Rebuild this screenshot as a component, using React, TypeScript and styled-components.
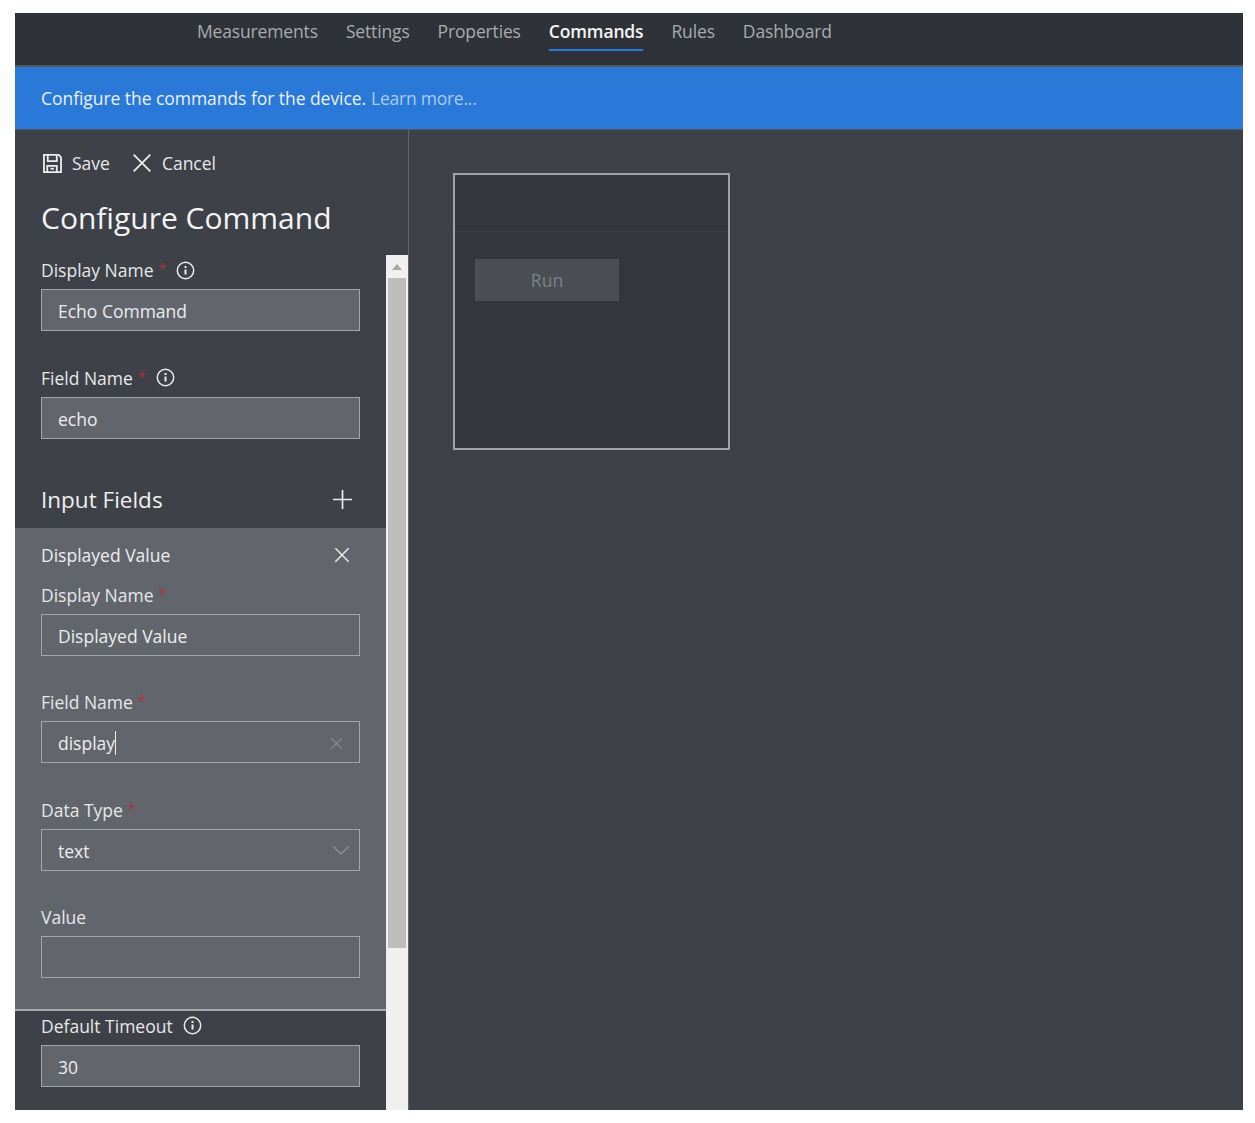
import React from 'react';
import styled, { createGlobalStyle } from 'styled-components';

const GlobalStyle = createGlobalStyle`
  html, body {
    margin: 0;
    padding: 0;
    background: #ffffff;
  }
  * {
    box-sizing: border-box;
  }
`;

const Frame = styled.div`
  width: 1228px;
  height: 1097px;
  margin: 13px 0 0 15px;
  display: flex;
  flex-direction: column;
  overflow: hidden;
  background: #3e4148;
  color: #e6e7e8;
  font-family: 'Open Sans', 'Noto Sans', 'Liberation Sans', sans-serif;
  font-size: 17.5px;
`;

const TopNav = styled.nav`
  height: 52px;
  flex-shrink: 0;
  display: flex;
  gap: 28px;
  padding-left: 182px;
  background: #2f3239;
`;

const Tab = styled.div<{ active?: boolean }>`
  height: 38px;
  line-height: 37px;
  color: ${props => (props.active ? '#f4f4f5' : '#a9abaf')};
  font-weight: ${props => (props.active ? 600 : 500)};
  border-bottom: 2px solid ${props => (props.active ? '#2a78d8' : 'transparent')};
  letter-spacing: -0.15px;
`;

const Banner = styled.div`
  height: 65px;
  flex-shrink: 0;
  display: flex;
  align-items: center;
  gap: 5px;
  padding-left: 26px;
  background: #2a78d8;
  border-top: 2px solid #55585e;
  border-bottom: 1px solid #55585e;
  color: #e8f1fb;
  letter-spacing: -0.05px;
`;

const LearnMore = styled.span`
  color: #a9cbf1;
  letter-spacing: -0.25px;
`;

const Body = styled.div`
  flex: 1;
  min-height: 0;
  display: flex;
`;

const Panel = styled.aside`
  width: 394px;
  flex-shrink: 0;
  display: flex;
  flex-direction: column;
  border-right: 1px solid #65676c;
`;

const Toolbar = styled.div`
  height: 36px;
  margin-top: 15px;
  display: flex;
  align-items: center;
  padding-left: 28px;
`;

const ToolButton = styled.div`
  display: flex;
  align-items: center;
  gap: 10px;
  margin-right: 22px;
  color: #e6e7e8;
`;

const Title = styled.h1`
  height: 54px;
  margin: 0;
  padding-left: 26px;
  font-size: 30px;
  font-weight: 400;
  line-height: 74px;
  color: #f4f4f5;
`;

const ScrollArea = styled.div`
  flex: 1;
  min-height: 0;
  margin-top: 20px;
  display: flex;
  overflow: hidden;
`;

const ScrollContent = styled.div`
  width: 371px;
  flex-shrink: 0;
`;

const ScrollBar = styled.div`
  width: 22px;
  flex-shrink: 0;
  display: flex;
  flex-direction: column;
  align-items: center;
  background: #f0f0f0;
`;

const ScrollArrow = styled.div`
  height: 23px;
  display: flex;
  align-items: center;
  justify-content: center;
  color: #a6a6a6;
`;

const ScrollThumb = styled.div`
  width: 18px;
  height: 670px;
  background: #bdbdbd;
`;

const FieldGroup = styled.div`
  padding-left: 26px;
`;

const Field = styled.div<{ last?: boolean }>`
  width: 319px;
  margin-bottom: ${props => (props.last ? '0' : '34.5px')};
`;

const Label = styled.div`
  height: 24px;
  margin: 3px 0 7px;
  display: flex;
  align-items: center;
  line-height: 24px;
  color: #e6e7e8;
`;

const Required = styled.span`
  align-self: flex-start;
  margin-left: 5px;
  margin-top: -1px;
  color: #a8343a;
  font-size: 14px;
`;

const InfoIcon = styled.svg`
  margin-left: 10px;
`;

const InputBox = styled.div<{ filled?: boolean }>`
  height: 42px;
  display: flex;
  align-items: center;
  padding: 2px 10px 0 16px;
  background: ${props => (props.filled ? '#62656c' : 'transparent')};
  border: 1.5px solid #a4a6a9;
  color: #eceded;
`;

const Caret = styled.span`
  width: 1px;
  height: 24px;
  background: #f0f0f0;
`;

const ClearButton = styled.span`
  display: flex;
  margin-left: auto;
  margin-right: 6px;
`;

const Chevron = styled.svg`
  margin-left: auto;
`;

const SectionHead = styled.div`
  height: 56px;
  margin-top: 33px;
  display: flex;
  align-items: center;
  justify-content: space-between;
  padding: 0 34px 0 26px;
  font-size: 22.5px;
  color: #eff0f0;
`;

const InputCard = styled.div`
  height: 483px;
  padding: 13px 0 0 26px;
  background: #62656c;
  border-bottom: 2px solid #a4a6a9;
`;

const CardHead = styled.div`
  width: 309px;
  height: 28px;
  margin-bottom: 14px;
  display: flex;
  align-items: center;
  justify-content: space-between;
  color: #eceded;
`;

const Canvas = styled.main`
  flex: 1;
  padding: 43px 0 0 44px;
`;

const Preview = styled.section`
  width: 277px;
  height: 277px;
  background: #33363d;
  border: 2px solid #a0a2a6;
`;

const PreviewHead = styled.div`
  height: 57px;
  border-bottom: 1px solid #3a3d44;
`;

const RunButton = styled.div`
  width: 144px;
  height: 42px;
  margin: 27px 0 0 20px;
  display: flex;
  align-items: center;
  justify-content: center;
  background: #4b4e55;
  color: #7e8186;
`;

const Info = () => (
  <InfoIcon width="19" height="19" viewBox="0 0 19 19" fill="none" stroke="#eceded">
    <circle cx="9.5" cy="9.5" r="8.2" strokeWidth="1.5" />
    <path d="M9.5 8.500v5" strokeWidth="2" />
    <path d="M9.5 5v2" strokeWidth="2" />
  </InfoIcon>
);

const Cross = ({ size = 18, color = '#eceded', width = 1.6 }: { size?: number; color?: string; width?: number }) => (
  <svg width={size} height={size} viewBox="0 0 18 18" fill="none" stroke={color} strokeWidth={width}>
    <path d="M1.5 1.5l15 15M16.5 1.5l-15 15" />
  </svg>
);

const SaveIcon = () => (
  <svg width="19" height="19" viewBox="0 0 20 20" fill="none" stroke="#eceded" strokeWidth="1.9">
    <path d="M1 1h15.5L19 3.500V19H1z" />
    <path d="M5 1.500v6h9.500v-6" />
    <path d="M4.500 19v-6.500h10V19" />
    <path d="M8 15.500h3.500" />
  </svg>
);

const PlusIcon = () => (
  <svg width="19" height="19" viewBox="0 0 20 20" fill="none" stroke="#eceded" strokeWidth="1.8">
    <path d="M10 0v20M0 10h20" />
  </svg>
);

const ScrollUp = () => (
  <svg width="10" height="6" viewBox="0 0 10 6" fill="currentColor">
    <path d="M5 0l5 6H0z" />
  </svg>
);

const App: React.FC = () => {
  const tabs = ['Measurements', 'Settings', 'Properties', 'Commands', 'Rules', 'Dashboard'];

  return (
    <>
      <GlobalStyle />
      <Frame>
        <TopNav>
          {tabs.map(tab => (
            <Tab key={tab} active={tab === 'Commands'}>
              {tab}
            </Tab>
          ))}
        </TopNav>
        <Banner>
          Configure the commands for the device. <LearnMore>Learn more...</LearnMore>
        </Banner>
        <Body>
          <Panel>
            <Toolbar>
              <ToolButton>
                <SaveIcon />
                Save
              </ToolButton>
              <ToolButton>
                <Cross size={20} />
                Cancel
              </ToolButton>
            </Toolbar>
            <Title>Configure Command</Title>
            <ScrollArea>
              <ScrollContent>
                <FieldGroup>
                  <Field>
                    <Label>
                      Display Name<Required>*</Required>
                      <Info />
                    </Label>
                    <InputBox filled>Echo Command</InputBox>
                  </Field>
                  <Field last>
                    <Label>
                      Field Name<Required>*</Required>
                      <Info />
                    </Label>
                    <InputBox filled>echo</InputBox>
                  </Field>
                </FieldGroup>
                <SectionHead>
                  Input Fields
                  <PlusIcon />
                </SectionHead>
                <InputCard>
                  <CardHead>
                    Displayed Value
                    <Cross size={16} />
                  </CardHead>
                  <Field>
                    <Label>
                      Display Name<Required>*</Required>
                    </Label>
                    <InputBox>Displayed Value</InputBox>
                  </Field>
                  <Field>
                    <Label>
                      Field Name<Required>*</Required>
                    </Label>
                    <InputBox>
                      display
                      <Caret />
                      <ClearButton>
                        <Cross size={13} color="#8d8f94" />
                      </ClearButton>
                    </InputBox>
                  </Field>
                  <Field>
                    <Label>
                      Data Type<Required>*</Required>
                    </Label>
                    <InputBox>
                      text
                      <Chevron width="16" height="9" viewBox="0 0 16 9" fill="none" stroke="#8f9196" strokeWidth="1.4">
                        <path d="M.5.5L8 8l7.500-7.500" />
                      </Chevron>
                    </InputBox>
                  </Field>
                  <Field last>
                    <Label>Value</Label>
                    <InputBox />
                  </Field>
                </InputCard>
                <FieldGroup>
                  <Field last>
                    <Label>
                      Default Timeout
                      <Info />
                    </Label>
                    <InputBox filled>30</InputBox>
                  </Field>
                </FieldGroup>
              </ScrollContent>
              <ScrollBar>
                <ScrollArrow>
                  <ScrollUp />
                </ScrollArrow>
                <ScrollThumb />
              </ScrollBar>
            </ScrollArea>
          </Panel>
          <Canvas>
            <Preview>
              <PreviewHead />
              <RunButton>Run</RunButton>
            </Preview>
          </Canvas>
        </Body>
      </Frame>
    </>
  );
};

export default App;
